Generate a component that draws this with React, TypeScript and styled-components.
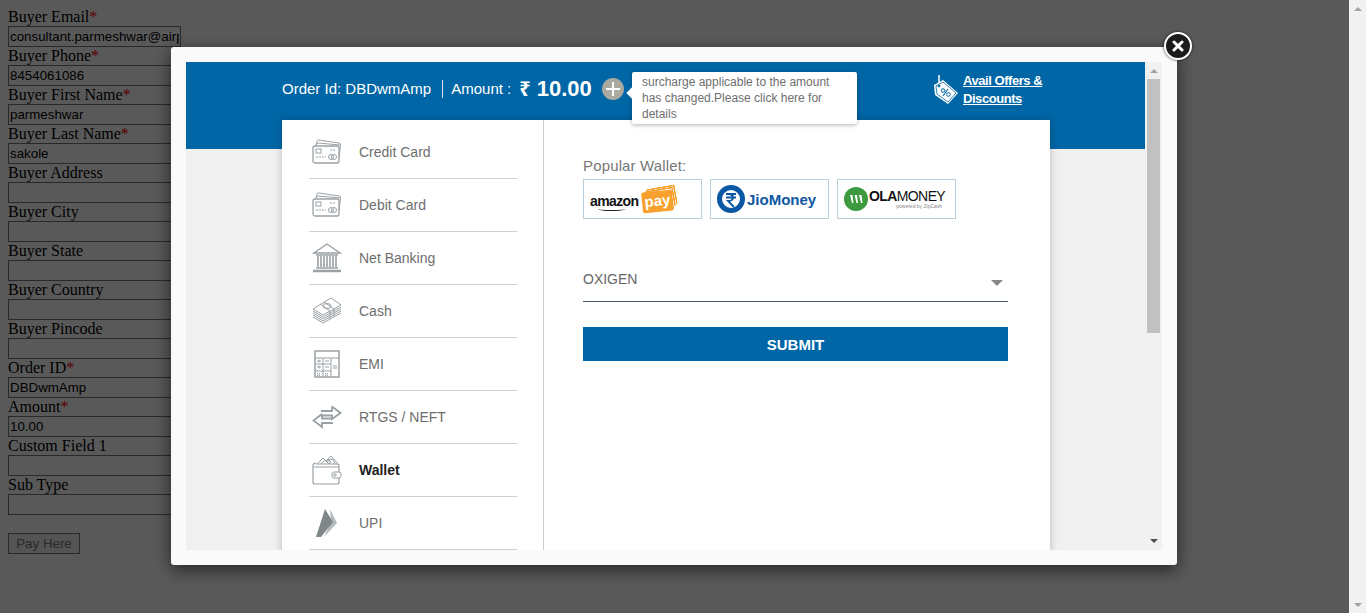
import React from 'react';
import styled, { createGlobalStyle } from 'styled-components';

const BLUE = '#0066a6';

const GlobalStyle = createGlobalStyle`
  html, body {
    height: 100%;
    overflow: hidden;
  }
  body {
    margin: 0;
    background: #fff;
    font-family: "Liberation Serif", "Times New Roman", serif;
    font-size: 16px;
    color: #000;
  }
`;

const Page = styled.div`
  display: flex;
  height: 613px;
  width: 1366px;
  overflow: hidden;
`;

const FormColumn = styled.form`
  flex: 1;
  padding: 8px;
  position: relative;
`;

const FieldLabel = styled.label`
  display: block;
  line-height: 18px;
`;

const Required = styled.span`
  color: #f00;
`;

const TextInput = styled.input`
  display: block;
  box-sizing: border-box;
  width: 173px;
  height: 21px;
  padding: 1px;
  border: 1px solid #767676;
  font-family: "Liberation Sans", Arial, sans-serif;
  font-size: 13.33px;
  color: #000;
  background: #fff;
`;

const PayButton = styled.button`
  display: block;
  box-sizing: border-box;
  width: 72px;
  height: 21px;
  margin-top: 18px;
  padding: 0;
  border: 1px solid #767676;
  background: #efefef;
  color: #777;
  font-family: "Liberation Sans", Arial, sans-serif;
  font-size: 13.33px;
`;

const PageScrollbar = styled.div`
  width: 17px;
  flex-shrink: 0;
  background: #f1f1f1;
  display: flex;
  flex-direction: column;
  justify-content: space-between;
  align-items: center;
  padding: 7px 0 6px;
  box-sizing: border-box;
`;

const Arrow = styled.span<{ $up?: boolean; $color: string }>`
  width: 0;
  height: 0;
  border-left: 4px solid transparent;
  border-right: 4px solid transparent;
  ${(p) => (p.$up ? `border-bottom: 4px solid ${p.$color};` : `border-top: 4px solid ${p.$color};`)}
`;

const Overlay = styled.div`
  position: fixed;
  left: 0;
  top: 0;
  width: 1349px;
  height: 613px;
  background: rgba(0, 0, 0, 0.65);
`;

const Modal = styled.div`
  position: absolute;
  left: 171px;
  top: 47px;
  width: 1006px;
  height: 518px;
  box-sizing: border-box;
  padding: 15px;
  display: flex;
  background: #fafafa;
  border-radius: 3px;
  box-shadow: 0 5px 18px rgba(0, 0, 0, 0.6);
  font-family: "Liberation Sans", Arial, sans-serif;
`;

const CloseButton = styled.button`
  position: absolute;
  left: 993px;
  top: -15px;
  width: 28px;
  height: 28px;
  padding: 0;
  box-sizing: border-box;
  border: 2px solid #fff;
  border-radius: 50%;
  background: #1c1c1c;
  box-shadow: 0 0 3px rgba(0, 0, 0, 0.8);
  display: flex;
  align-items: center;
  justify-content: center;
`;

const Content = styled.div`
  width: 959px;
  height: 488px;
  overflow: hidden;
  background: #f0f0f0;
`;

const Banner = styled.div`
  height: 87px;
  background: ${BLUE};
  color: #fff;
  display: flex;
  align-items: flex-start;
  padding: 10px 0 0 96px;
  box-sizing: border-box;
  font-size: 15px;
  position: relative;
`;

const OrderText = styled.span`
  line-height: 33px;
`;

const Divider = styled.span`
  width: 1px;
  height: 18px;
  margin: 8px 8px 0 11px;
  background: #d5e3ee;
`;

const Rupee = styled.span`
  font-family: "Noto Sans", "DejaVu Sans", sans-serif;
  font-size: 20px;
  font-weight: 700;
  line-height: 33px;
  margin-left: 8px;
`;

const AmountValue = styled.strong`
  font-size: 22px;
  line-height: 33px;
  margin-left: 6px;
`;

const PlusBadge = styled.span`
  width: 22px;
  height: 22px;
  margin: 6px 0 0 10px;
  border-radius: 50%;
  background: #a9a99f;
  display: flex;
  align-items: center;
  justify-content: center;
`;

const Tooltip = styled.div`
  position: absolute;
  z-index: 2;
  left: 446px;
  top: 10px;
  width: 225px;
  height: 52px;
  box-sizing: border-box;
  padding: 2px 10px;
  background: #fff;
  border-radius: 2px;
  color: #6e6e6e;
  font-size: 12px;
  line-height: 16px;
  box-shadow: 0 1px 4px rgba(0, 0, 0, 0.3);
  &::before {
    content: '';
    position: absolute;
    left: -4px;
    top: 17px;
    width: 8px;
    height: 8px;
    background: #fff;
    transform: rotate(45deg);
  }
`;

const Offers = styled.div`
  position: absolute;
  left: 747px;
  top: 10px;
  display: flex;
  align-items: center;
  gap: 5px;
`;

const OfferLink = styled.a`
  color: #fff;
  font-size: 13px;
  font-weight: 700;
  line-height: 18px;
  letter-spacing: -0.45px;
  text-decoration: underline;
  width: 90px;
`;

const Card = styled.div`
  width: 768px;
  height: 500px;
  margin: -29px 0 0 96px;
  position: relative;
  background: #fff;
  display: flex;
  box-shadow: 0 0 8px rgba(0, 0, 0, 0.22);
`;

const Sidebar = styled.ul`
  width: 262px;
  margin: 0;
  padding: 6px 0 0 27px;
  box-sizing: border-box;
  border-right: 1px solid #ccc;
  list-style: none;
`;

const MenuItem = styled.li<{ $active?: boolean }>`
  width: 208px;
  height: 53px;
  box-sizing: border-box;
  border-bottom: 1px solid #c9d2d8;
  display: flex;
  align-items: center;
  font-size: 14px;
  color: ${(p) => (p.$active ? '#222' : '#6e6e6e')};
  font-weight: ${(p) => (p.$active ? 700 : 400)};
`;

const MenuIcon = styled.span`
  width: 50px;
  height: 34px;
  flex-shrink: 0;
  display: flex;
  align-items: center;
  justify-content: center;
  padding-right: 14px;
  box-sizing: border-box;
`;

const Panel = styled.div`
  flex: 1;
  padding: 37px 42px 0 39px;
`;

const PanelLabel = styled.div`
  font-size: 15px;
  line-height: 18px;
  letter-spacing: 0.15px;
  color: #777;
`;

const WalletRow = styled.div`
  display: flex;
  gap: 8px;
  margin-top: 4px;
`;

const WalletTile = styled.div`
  width: 119px;
  height: 40px;
  box-sizing: border-box;
  border: 1px solid #b9ced8;
  padding-left: 6px;
  display: flex;
  align-items: center;
  overflow: hidden;
`;

const AmazonWord = styled.span`
  font-size: 14px;
  font-weight: 700;
  color: #111;
  letter-spacing: -0.6px;
  position: relative;
  margin: 4px 3px 0 0;
  &::after {
    content: '';
    position: absolute;
    left: 8px;
    right: 14px;
    bottom: -2px;
    height: 3px;
    border-bottom: 1px solid #222;
    border-radius: 0 0 50% 50%;
  }
`;

const PayBadge = styled.span`
  position: relative;
  width: 31px;
  height: 21px;
  margin-top: 5px;
  background: #f7a02d;
  color: #fff;
  font-size: 15px;
  font-weight: 700;
  text-align: center;
  border-radius: 2px;
  transform: rotate(-6deg);
  line-height: 19px;
  &::before,
  &::after {
    content: '';
    position: absolute;
    z-index: -1;
    right: -2px;
    top: -2px;
    width: 27px;
    height: 18px;
    border-top: 2px solid #f7a02d;
    border-right: 2px solid #f7a02d;
    border-radius: 2px;
    transform: rotate(-4deg);
  }
  &::after {
    right: -4px;
    top: -4px;
  }
`;

const JioWord = styled.span`
  color: #0b57a4;
  font-size: 15px;
  font-weight: 700;
  margin-left: 2px;
`;

const OlaWrap = styled.span`
  margin-left: 1px;
  display: flex;
  flex-direction: column;
  align-items: flex-end;
  line-height: 13px;
`;

const OlaWord = styled.span`
  color: #111;
  font-size: 14px;
  letter-spacing: -0.6px;
  b {
    font-weight: 700;
  }
`;

const OlaNote = styled.span`
  color: #888;
  font-size: 5px;
  line-height: 6px;
  margin-right: 3px;
`;

const SelectBox = styled.div`
  margin-top: 42px;
  height: 41px;
  width: 425px;
  box-sizing: border-box;
  border-bottom: 1px solid #4a5a6a;
  display: flex;
  justify-content: space-between;
  font-size: 14px;
  line-height: 36px;
  color: #666;
`;

const SelectCaret = styled.span`
  width: 0;
  height: 0;
  margin: 19px 5px 0 0;
  border-left: 6px solid transparent;
  border-right: 6px solid transparent;
  border-top: 6px solid #888;
`;

const SubmitButton = styled.button`
  display: block;
  width: 425px;
  height: 34px;
  margin-top: 25px;
  border: 0;
  padding: 0;
  background: ${BLUE};
  color: #fff;
  font-family: inherit;
  font-size: 15px;
  font-weight: 700;
`;

const ModalScrollbar = styled.div`
  width: 17px;
  height: 488px;
  background: #f1f1f1;
  display: flex;
  flex-direction: column;
  align-items: center;
  padding-top: 7px;
  box-sizing: border-box;
`;

const Thumb = styled.div`
  width: 13px;
  height: 254px;
  margin-top: 6px;
  background: #c1c1c1;
`;

const BottomArrow = styled.div`
  margin-top: auto;
  margin-bottom: 7px;
  display: flex;
`;

const stroke = { fill: 'none', stroke: '#9aa1a5', strokeWidth: 1 };

const CardIcon = () => (
  <svg width="30" height="26" viewBox="0 0 30 26">
    <path d="M4 6 L5 2 Q5 1 7 1 L27 4 Q28.500 4 28.500 6 L27 19" {...stroke} />
    <path d="M3 7 L6 4 L28 6" {...stroke} />
    <rect x="1" y="7" width="26" height="17" rx="2" {...stroke} strokeWidth={1.300} />
    <rect x="4" y="10" width="5" height="4" {...stroke} />
    <path d="M18 11h6M4 18h10" {...stroke} strokeDasharray="2 1" />
    <circle cx="19" cy="18" r="2.500" {...stroke} />
    <circle cx="22" cy="18" r="2.500" {...stroke} />
  </svg>
);

const BankIcon = () => (
  <svg width="30" height="30" viewBox="0 0 30 30">
    <path d="M15 1 L28 10 H2 Z" {...stroke} strokeWidth={1.300} />
    <path d="M4 12h22M4 25h22" {...stroke} strokeWidth={1.500} />
    <path d="M6 13v11M9 13v11M12 13v11M15 13v11M18 13v11M21 13v11M24 13v11" {...stroke} strokeWidth={1.600} />
    <path d="M1 28h28" {...stroke} strokeWidth={2.500} />
  </svg>
);

const CashIcon = () => (
  <svg width="30" height="28" viewBox="0 0 30 28">
    <path d="M1 12 L19 1 L29 8 L11 18 Z" {...stroke} />
    <path d="M1 14 L11 20 L29 10M1 16 L11 22 L29 12M1 18 L11 24 L29 14M1 20 L11 26 L29 16" {...stroke} />
    <path d="M8 7 L18 14 V22 M12 5 L22 12 V20" {...stroke} />
    <ellipse cx="15" cy="9" rx="4" ry="2.500" {...stroke} />
  </svg>
);

const EmiIcon = () => (
  <svg width="26" height="28" viewBox="0 0 26 28">
    <rect x="1" y="1" width="24" height="26" {...stroke} strokeWidth={1.500} />
    <path d="M1 8h24M1 14h16M1 21h16M9 8v19M17 8v19" {...stroke} />
    <path d="M3 11h4M5 9.500v3M11 11h4M3 23l3 3M6 23l-3 3M11 23l3 3M14 23l-3 3M3 17h4M5 15.500v3M11 17h4M19 16h4M19 18h4" {...stroke} />
  </svg>
);

const TransferIcon = () => (
  <svg width="30" height="24" viewBox="0 0 30 24">
    <path d="M20 1.500 L28.500 8 L20 14 V10.500 H9 M9 6 H20 V1.500" {...stroke} strokeWidth={1.800} />
    <path d="M10 9 L1.500 15.500 L10 22 V18 H21 M21 13.500 H10 V9" {...stroke} strokeWidth={1.800} />
  </svg>
);

const WalletIcon = () => (
  <svg width="30" height="30" viewBox="0 0 30 30">
    <path d="M5 9 L11 3 L14 6 L19 1 L26 9" {...stroke} />
    <path d="M9 9 L13 5 L17 9 M15 5 L21 4 L23 9" {...stroke} />
    <circle cx="17" cy="7" r="1.500" {...stroke} />
    <path d="M4 8 Q1 8 1 11 V27 Q1 29 3 29 H25 Q27 29 27 27 V10 Q27 9 25 9 H4" {...stroke} strokeWidth={1.200} />
    <path d="M2 12 H26" {...stroke} />
    <rect x="20" y="17" width="9" height="6" rx="2" {...stroke} fill="#fff" />
    <circle cx="23" cy="20" r="1.200" {...stroke} />
  </svg>
);

const UpiIcon = () => (
  <svg width="22" height="30" viewBox="0 0 22 30">
    <path d="M14 1 L21 15 L8 29 L15 14 Z" fill="#b6bbbd" />
    <path d="M0 29 L9 1 L17 14 L5 29 Z" fill="#7f8789" />
  </svg>
);

const menu = [
  { label: 'Credit Card', icon: <CardIcon /> },
  { label: 'Debit Card', icon: <CardIcon /> },
  { label: 'Net Banking', icon: <BankIcon /> },
  { label: 'Cash', icon: <CashIcon /> },
  { label: 'EMI', icon: <EmiIcon /> },
  { label: 'RTGS / NEFT', icon: <TransferIcon /> },
  { label: 'Wallet', icon: <WalletIcon />, active: true },
  { label: 'UPI', icon: <UpiIcon /> },
];

const fields = [
  { label: 'Buyer Email', required: true, value: 'consultant.parmeshwar@airpay.co.in' },
  { label: 'Buyer Phone', required: true, value: '8454061086' },
  { label: 'Buyer First Name', required: true, value: 'parmeshwar' },
  { label: 'Buyer Last Name', required: true, value: 'sakole' },
  { label: 'Buyer Address', value: '' },
  { label: 'Buyer City', value: '' },
  { label: 'Buyer State', value: '' },
  { label: 'Buyer Country', value: '' },
  { label: 'Buyer Pincode', value: '' },
  { label: 'Order ID', required: true, value: 'DBDwmAmp' },
  { label: 'Amount', required: true, value: '10.00' },
  { label: 'Custom Field 1', value: '' },
  { label: 'Sub Type', value: '' },
];

export default function App() {
  return (
    <>
      <GlobalStyle />
      <Page>
        <FormColumn>
          {fields.map((f) => (
            <FieldLabel key={f.label}>
              {f.label}
              {f.required && <Required>*</Required>}
              <TextInput defaultValue={f.value} />
            </FieldLabel>
          ))}
          <PayButton type="button" disabled>
            Pay Here
          </PayButton>
          <Overlay>
            <Modal>
              <Content>
                <Banner>
                  <OrderText>Order Id: DBDwmAmp</OrderText>
                  <Divider />
                  <OrderText>Amount :</OrderText>
                  <Rupee>₹</Rupee>
                  <AmountValue>10.00</AmountValue>
                  <PlusBadge>
                    <svg width="16" height="16" viewBox="0 0 16 16">
                      <path d="M8 1v14M1 8h14" stroke="#fff" strokeWidth="2" />
                    </svg>
                  </PlusBadge>
                  <Tooltip>surcharge applicable to the amount has changed.Please click here for details</Tooltip>
                  <Offers>
                    <svg width="25" height="30" viewBox="0 0 25 30">
                      <path d="M6 0 V9" stroke="#fff" strokeWidth="1.500" fill="none" />
                      <path d="M1 10 L10 5 L25 18 L15 29 L2 20 Z" fill="#fff" />
                      <path d="M3 11 L10 7 L23 18 L15 27 L4 19 Z" fill="none" stroke={BLUE} strokeWidth="0.800" />
                      <circle cx="6" cy="11" r="1.300" fill={BLUE} />
                      <path d="M10 21 L15 14" stroke={BLUE} strokeWidth="1.200" />
                      <circle cx="10" cy="15.500" r="1.800" fill="none" stroke={BLUE} />
                      <circle cx="15.500" cy="19.500" r="1.800" fill="none" stroke={BLUE} />
                    </svg>
                    <OfferLink href="#">Avail Offers &amp; Discounts</OfferLink>
                  </Offers>
                </Banner>
                <Card>
                  <Sidebar>
                    {menu.map((m) => (
                      <MenuItem key={m.label} $active={m.active}>
                        <MenuIcon>{m.icon}</MenuIcon>
                        {m.label}
                      </MenuItem>
                    ))}
                  </Sidebar>
                  <Panel>
                    <PanelLabel>Popular Wallet:</PanelLabel>
                    <WalletRow>
                      <WalletTile>
                        <AmazonWord>amazon</AmazonWord>
                        <PayBadge>pay</PayBadge>
                      </WalletTile>
                      <WalletTile>
                        <svg width="28" height="28" viewBox="0 0 28 28">
                          <circle cx="14" cy="14" r="11.500" fill="#fff" stroke="#0b57a4" strokeWidth="5" />
                          <path d="M9 9h10M9 12.500h10M11 9q5 0 5 3.500t-5 3.500l6 6" fill="none" stroke="#0b57a4" strokeWidth="1.800" />
                        </svg>
                        <JioWord>JioMoney</JioWord>
                      </WalletTile>
                      <WalletTile>
                        <svg width="24" height="24" viewBox="0 0 24 24">
                          <circle cx="12" cy="12" r="12" fill="#3d9a3f" />
                          <path d="M6 8l2 8h1.500l-1-8zM10.500 8l2 8H14l-1-8zM15 8l2 8h1.500l-1-8z" fill="#fff" />
                        </svg>
                        <OlaWrap>
                          <OlaWord>
                            <b>OLA</b>MONEY
                          </OlaWord>
                          <OlaNote>powered by ZipCash</OlaNote>
                        </OlaWrap>
                      </WalletTile>
                    </WalletRow>
                    <SelectBox>
                      OXIGEN
                      <SelectCaret />
                    </SelectBox>
                    <SubmitButton type="button">SUBMIT</SubmitButton>
                  </Panel>
                </Card>
              </Content>
              <ModalScrollbar>
                <Arrow $up $color="#a3a3a3" />
                <Thumb />
                <BottomArrow>
                  <Arrow $color="#505050" />
                </BottomArrow>
              </ModalScrollbar>
              <CloseButton type="button" aria-label="Close">
                <svg width="12" height="12" viewBox="0 0 12 12">
                  <path d="M2 2l8 8M10 2l-8 8" stroke="#fff" strokeWidth="3" strokeLinecap="round" />
                </svg>
              </CloseButton>
            </Modal>
          </Overlay>
        </FormColumn>
        <PageScrollbar>
          <Arrow $up $color="#a3a3a3" />
          <Arrow $color="#a3a3a3" />
        </PageScrollbar>
      </Page>
    </>
  );
}
